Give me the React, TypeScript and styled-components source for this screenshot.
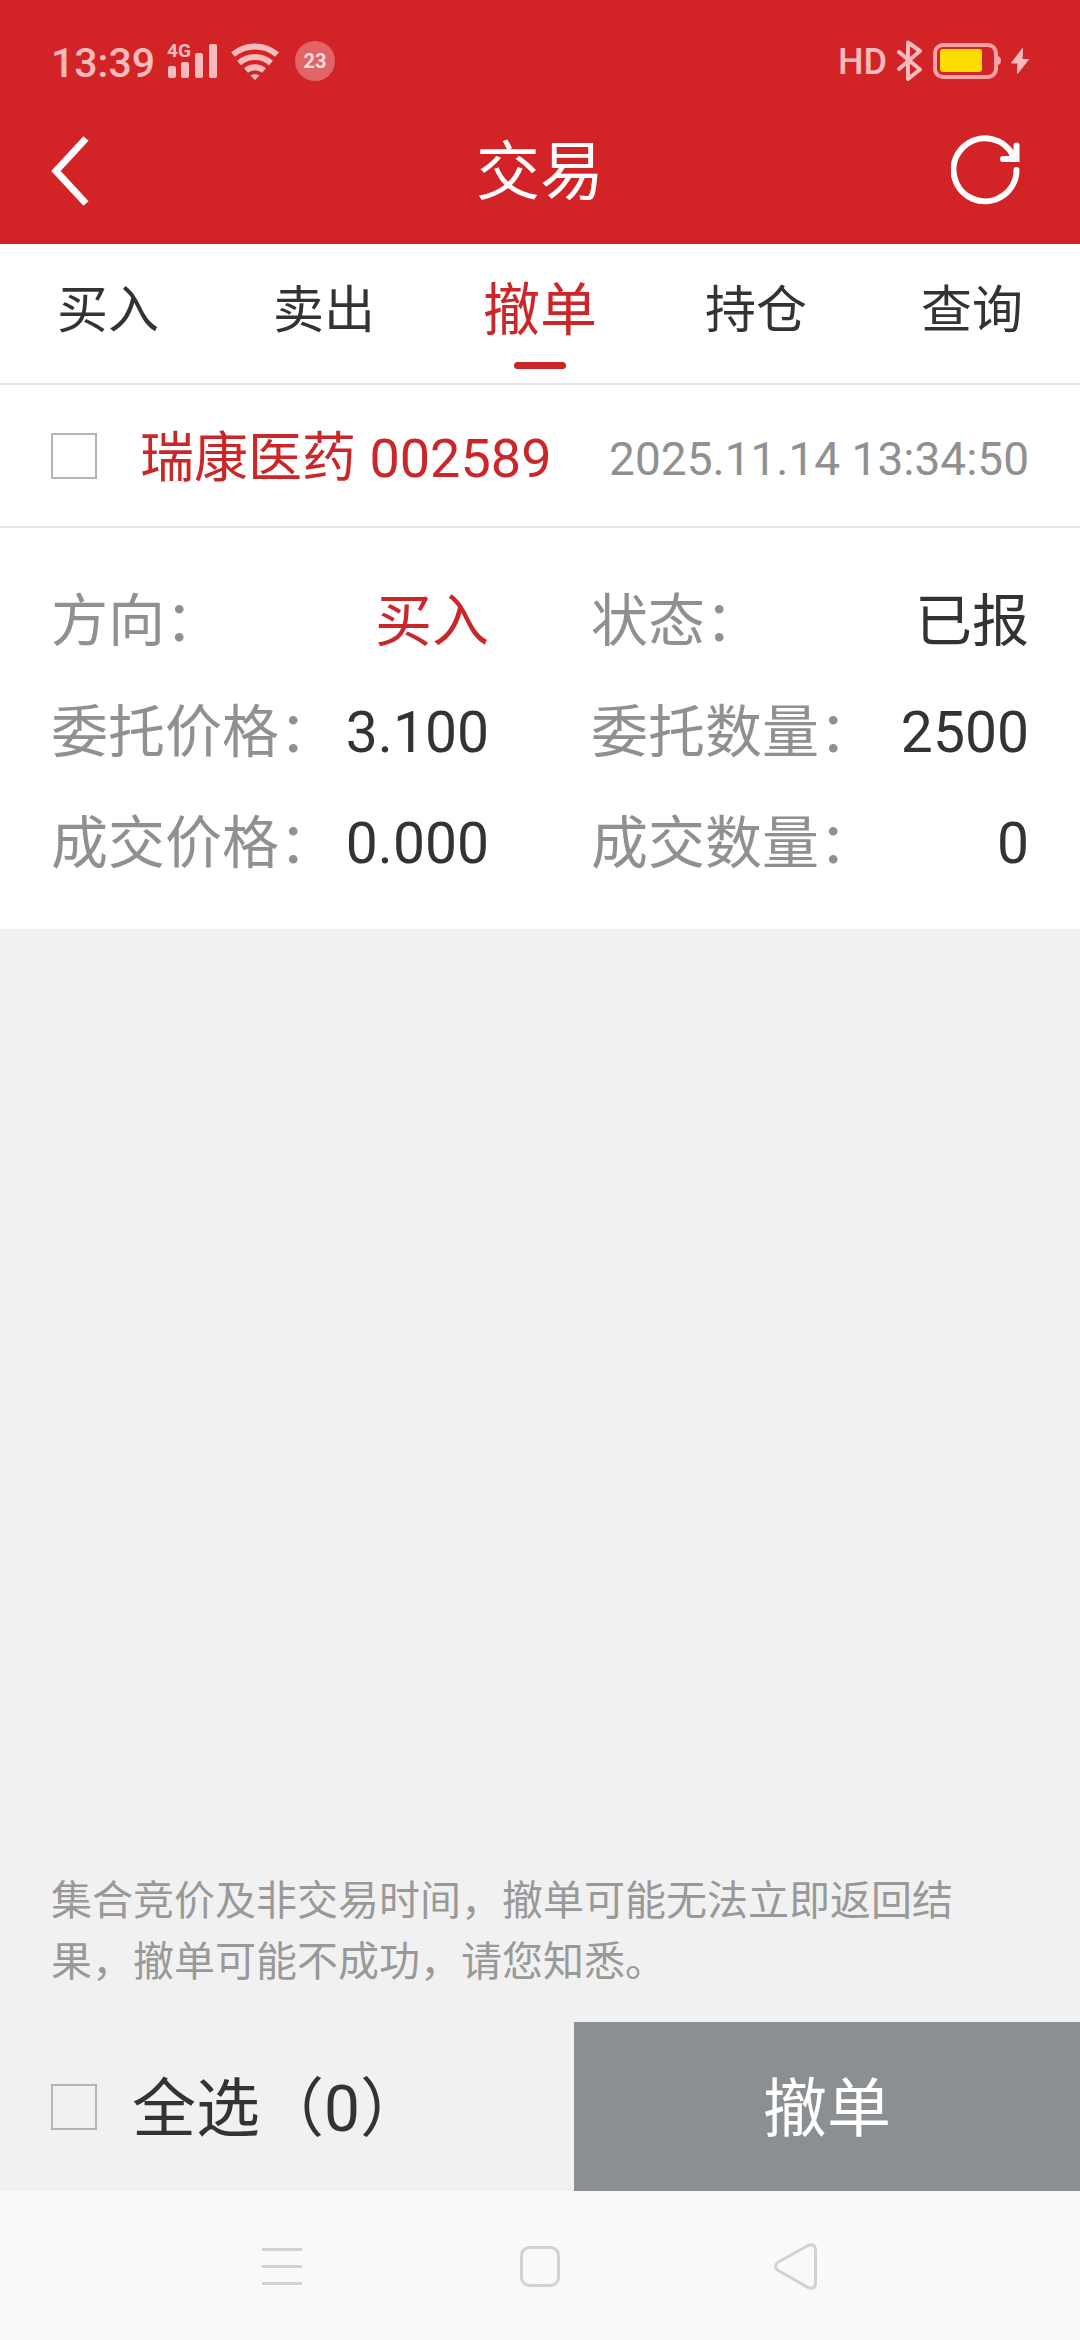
import React, { useState } from 'react';
import styled, { createGlobalStyle } from 'styled-components';

const color = {
  brand: '#d22426',
  accent: '#cb2629',
  text: '#333333',
  label: '#909090',
  notice: '#999999',
  page: '#f1f1f1',
  line: '#e6e6e6',
  status: '#f6bcbd',
  navIcon: '#d2d2d2',
};

const GlobalStyle = createGlobalStyle`
  * {
    box-sizing: border-box;
  }
  body {
    margin: 0;
    font-family: Roboto, 'Noto Sans CJK SC', sans-serif;
    color: ${color.text};
    background: ${color.page};
  }
  button {
    margin: 0;
    padding: 0;
    border: 0;
    background: none;
    font: inherit;
    color: inherit;
    cursor: pointer;
  }
  svg {
    display: block;
  }
`;

const Page = styled.div`
  min-height: 100vh;
  display: flex;
  flex-direction: column;
`;

const Header = styled.header`
  background: ${color.brand};
`;

const StatusBar = styled.div`
  height: 96px;
  padding: 26px 51px 0;
  display: flex;
  align-items: center;
  justify-content: space-between;
  color: ${color.status};
`;

const StatusGroup = styled.div<{ $gap: number }>`
  display: flex;
  align-items: center;
  gap: ${(p) => p.$gap}px;
`;

const StatusTime = styled.time`
  padding-top: 4px;
  font-size: 41px;
  line-height: 48px;
  font-weight: 500;
`;

const HdMark = styled.span`
  padding-top: 2px;
  font-size: 36px;
  line-height: 48px;
  font-weight: 500;
`;

const CountBadge = styled.span`
  width: 40px;
  height: 40px;
  border-radius: 50%;
  display: flex;
  align-items: center;
  justify-content: center;
  background: #e16467;
  color: #fbdedf;
  font-size: 20px;
  font-weight: 700;
`;

const TitleBar = styled.div`
  height: 148px;
  padding: 0 51px;
  display: grid;
  grid-template-columns: 1fr auto 1fr;
  align-items: center;
  color: #ffffff;
`;

const IconButton = styled.button<{ $end?: boolean }>`
  justify-self: ${(p) => (p.$end ? 'end' : 'start')};
`;

const Title = styled.h1`
  margin: 0;
  padding-top: 6px;
  font-size: 64px;
  line-height: 80px;
  font-weight: 400;
`;

const Tabs = styled.nav`
  display: flex;
  background: #ffffff;
  border-bottom: 2px solid ${color.line};
`;

const Tab = styled.button<{ $active: boolean }>`
  flex: 1;
  padding: 27px 0 14px;
  display: flex;
  flex-direction: column;
  align-items: center;
  gap: 11px;
  font-size: ${(p) => (p.$active ? 57 : 51)}px;
  line-height: 80px;
  color: ${(p) => (p.$active ? color.accent : color.text)};

  &::after {
    content: '';
    width: 52px;
    height: 7px;
    border-radius: 4px;
    background: ${(p) => (p.$active ? color.accent : 'transparent')};
  }
`;

const Main = styled.main`
  flex: 1;
  display: flex;
  flex-direction: column;
  justify-content: space-between;
`;

const Order = styled.article`
  background: #ffffff;
`;

const OrderHead = styled.div`
  height: 143px;
  padding: 0 51px;
  display: flex;
  align-items: center;
  justify-content: space-between;
  border-bottom: 2px solid ${color.line};
`;

const CheckLabel = styled.label<{ $gap: number }>`
  display: flex;
  align-items: center;
  gap: ${(p) => p.$gap}px;
`;

const CheckText = styled.span<{ $size: number; $accent?: boolean }>`
  padding-top: 6px;
  font-size: ${(p) => p.$size}px;
  line-height: 80px;
  color: ${(p) => (p.$accent ? color.accent : color.text)};
`;

const Checkbox = styled.input`
  appearance: none;
  flex: none;
  width: 46px;
  height: 46px;
  margin: 0;
  border: 2px solid #b4b4b4;

  &:checked {
    background: ${color.accent};
    border-color: ${color.accent};
  }
`;

const OrderTime = styled.time`
  padding-top: 6px;
  font-size: 46px;
  line-height: 80px;
  color: ${color.label};
`;

const Details = styled.dl`
  margin: 0;
  padding: 38px 51px 30px;
  display: grid;
  grid-template-columns: 1fr 1fr;
  column-gap: 102px;
`;

const Detail = styled.div`
  display: flex;
  justify-content: space-between;
  font-size: 57px;
  line-height: 111px;
  white-space: nowrap;
`;

const DetailLabel = styled.dt`
  color: ${color.label};
`;

const DetailValue = styled.dd<{ $accent?: boolean }>`
  margin: 0;
  color: ${(p) => (p.$accent ? color.accent : color.text)};
`;

const Notice = styled.p`
  margin: 0;
  padding: 0 51px 29px;
  font-size: 41px;
  line-height: 61px;
  color: ${color.notice};
`;

const ActionBar = styled.footer`
  height: 169px;
  display: grid;
  grid-template-columns: 574fr 506fr;
`;

const SelectAll = styled.div`
  padding-left: 51px;
  display: flex;
  align-items: center;
`;

const CancelButton = styled.button`
  && {
    padding-top: 6px;
    background: #8b8f92;
    color: #ffffff;
    font-size: 64px;
    line-height: 80px;
  }
`;

const SystemNav = styled.nav`
  height: 149px;
  display: flex;
  align-items: center;
  justify-content: center;
  gap: 210px;
  background: #f9f9f9;
  color: ${color.navIcon};
`;

const SignalIcon = () => (
  <svg width="50" height="56" viewBox="168 33 50 56" fill="currentColor" aria-hidden="true">
    <text x="168" y="57" fontSize="19" fontWeight="700" fontFamily="Roboto, sans-serif">4G</text>
    <rect x="169" y="66" width="8" height="12" rx="2" />
    <rect x="182" y="62" width="8" height="16" rx="2" />
    <rect x="196" y="53" width="8" height="25" rx="2" />
    <rect x="210" y="44" width="8" height="34" rx="2" />
  </svg>
);

const WifiIcon = () => (
  <svg width="54" height="40" viewBox="229 41 54 40" fill="none" stroke="currentColor" strokeWidth="6" aria-hidden="true">
    <path d="M233 54.500 A34 34 0 0 1 277 54.500" />
    <path d="M239 63 A24 24 0 0 1 271 63" />
    <path d="M246 70.500 A14 14 0 0 1 264 70.500" />
    <path d="M250.500 75.500 Q255 72.500 259.500 75.500 L255 80 Z" fill="currentColor" stroke="none" />
  </svg>
);

const BluetoothIcon = () => (
  <svg width="26" height="42" viewBox="898 41 26 42" fill="none" stroke="currentColor" strokeWidth="4" strokeLinejoin="round" strokeLinecap="round" aria-hidden="true">
    <path d="M900 53 L921 70.500 L909 80 V43.500 L921 52 L900 70" />
  </svg>
);

const BatteryIcon = () => (
  <svg width="68" height="36" viewBox="933 43 68 36" aria-hidden="true">
    <rect x="935" y="45" width="61" height="32" rx="8" fill="none" stroke="#f7a3a5" strokeWidth="4" />
    <path d="M998 56 Q1001 57 1001 60.500 Q1001 64 998 65 Z" fill="#f7a3a5" />
    <rect x="940" y="49" width="42" height="23" rx="3" fill="#ffdc00" />
  </svg>
);

const BoltIcon = () => (
  <svg width="18" height="28" viewBox="1011 48 18 28" fill="currentColor" stroke="currentColor" strokeWidth="1" strokeLinejoin="round" aria-hidden="true">
    <path d="M1022.500 49.500 L1011.500 64 H1018 L1017.500 74.500 L1028.500 60.500 H1022 Z" />
  </svg>
);

const BackIcon = () => (
  <svg width="78" height="78" viewBox="51 131 78 78" fill="none" stroke="currentColor" strokeWidth="7" aria-hidden="true">
    <path d="M86 138.500 L56 171 L86 203.500" />
  </svg>
);

const RefreshIcon = () => (
  <svg width="78" height="78" viewBox="951 131 78 78" fill="none" stroke="currentColor" strokeWidth="6" strokeLinecap="round" aria-hidden="true">
    <path d="M1016.500 170 A31.500 31.500 0 1 1 1014 157.500" />
    <path d="M1016.500 145.500 V159 H1003" />
  </svg>
);

const MenuIcon = () => (
  <svg width="48" height="48" viewBox="0 0 48 48" stroke="currentColor" strokeWidth="3" aria-hidden="true">
    <path d="M4 7.500 H44 M4 24.500 H44 M4 41.500 H44" />
  </svg>
);

const HomeIcon = () => (
  <svg width="48" height="48" viewBox="0 0 48 48" fill="none" stroke="currentColor" strokeWidth="3" aria-hidden="true">
    <rect x="5.500" y="5.500" width="37" height="38" rx="8" />
  </svg>
);

const TriangleIcon = () => (
  <svg width="48" height="48" viewBox="0 0 48 48" fill="none" stroke="currentColor" strokeWidth="3" strokeLinejoin="round" aria-hidden="true">
    <path d="M3.500 20.500 L34 3.500 Q40.500 1 41.500 7 V42 Q40.500 48 34 45.500 L3.500 28 Q-0.500 24.500 3.500 20.500 Z" />
  </svg>
);

const tabs = ['买入', '卖出', '撤单', '持仓', '查询'];

const details = [
  { label: '方向：', value: '买入', accent: true },
  { label: '状态：', value: '已报' },
  { label: '委托价格：', value: '3.100' },
  { label: '委托数量：', value: '2500' },
  { label: '成交价格：', value: '0.000' },
  { label: '成交数量：', value: '0' },
];

export default function App() {
  const [tab, setTab] = useState('撤单');
  const [checked, setChecked] = useState(false);

  return (
    <Page lang="zh-CN">
      <GlobalStyle />
      <Header>
        <StatusBar>
          <StatusGroup $gap={12}>
            <StatusTime>13:39</StatusTime>
            <SignalIcon />
            <WifiIcon />
            <CountBadge>23</CountBadge>
          </StatusGroup>
          <StatusGroup $gap={10}>
            <HdMark>HD</HdMark>
            <BluetoothIcon />
            <BatteryIcon />
            <BoltIcon />
          </StatusGroup>
        </StatusBar>
        <TitleBar>
          <IconButton type="button" aria-label="返回">
            <BackIcon />
          </IconButton>
          <Title>交易</Title>
          <IconButton type="button" aria-label="刷新" $end>
            <RefreshIcon />
          </IconButton>
        </TitleBar>
      </Header>
      <Tabs>
        {tabs.map((name) => (
          <Tab key={name} type="button" $active={name === tab} onClick={() => setTab(name)}>
            {name}
          </Tab>
        ))}
      </Tabs>
      <Main>
        <Order>
          <OrderHead>
            <CheckLabel $gap={43}>
              <Checkbox type="checkbox" checked={checked} onChange={(e) => setChecked(e.target.checked)} />
              <CheckText $size={54} $accent>
                瑞康医药 002589
              </CheckText>
            </CheckLabel>
            <OrderTime>2025.11.14 13:34:50</OrderTime>
          </OrderHead>
          <Details>
            {details.map((d) => (
              <Detail key={d.label}>
                <DetailLabel>{d.label}</DetailLabel>
                <DetailValue $accent={d.accent}>{d.value}</DetailValue>
              </Detail>
            ))}
          </Details>
        </Order>
        <Notice>集合竞价及非交易时间，撤单可能无法立即返回结果，撤单可能不成功，请您知悉。</Notice>
      </Main>
      <ActionBar>
        <SelectAll>
          <CheckLabel $gap={35}>
            <Checkbox type="checkbox" checked={checked} onChange={(e) => setChecked(e.target.checked)} />
            <CheckText $size={64}>全选（{checked ? 1 : 0}）</CheckText>
          </CheckLabel>
        </SelectAll>
        <CancelButton type="button">撤单</CancelButton>
      </ActionBar>
      <SystemNav>
        <IconButton type="button" aria-label="最近任务">
          <MenuIcon />
        </IconButton>
        <IconButton type="button" aria-label="主屏幕">
          <HomeIcon />
        </IconButton>
        <IconButton type="button" aria-label="后退">
          <TriangleIcon />
        </IconButton>
      </SystemNav>
    </Page>
  );
}
